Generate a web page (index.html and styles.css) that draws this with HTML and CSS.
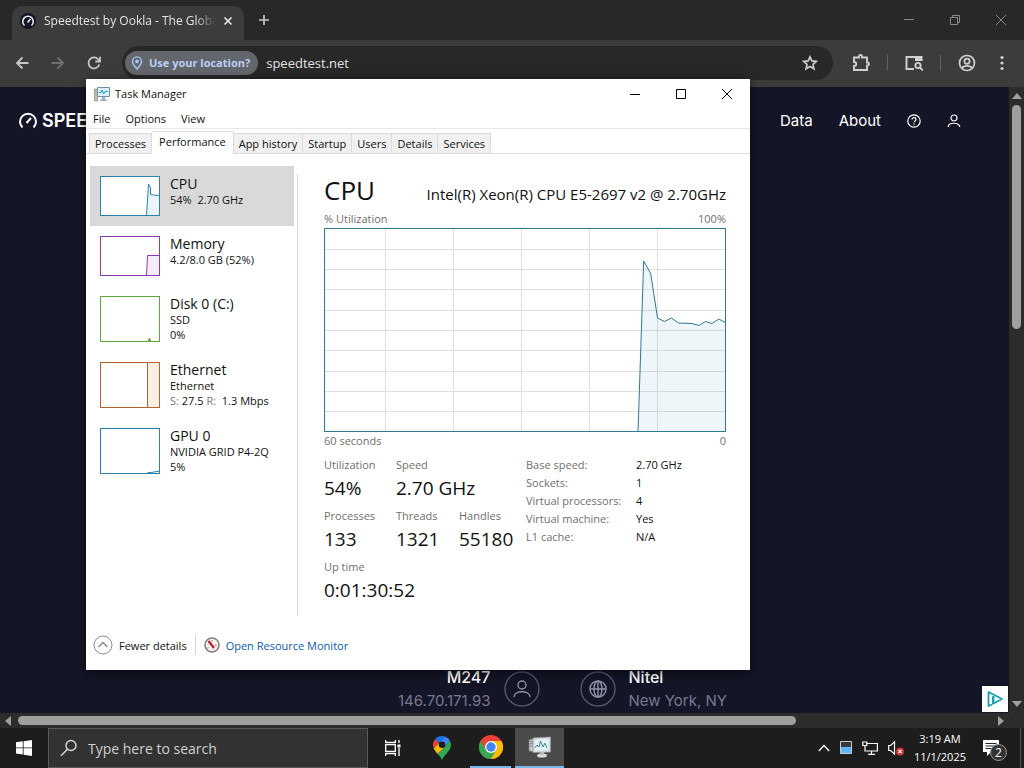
FILE: index.html
```html
<!DOCTYPE html>
<html lang="en">
  <head>
    <meta charset="UTF-8" />
    <meta name="viewport" content="width=device-width, initial-scale=1.0" />
    <title>Desktop</title>
    <link rel="stylesheet" href="styles.css">
  </head>
  <body>
    <!-- browser -->
    <div class="browser">
      <header class="tab-strip">
        <div class="browser-tab">
          <svg class="favicon" viewBox="0 0 16 16" fill="none" stroke="#e8eaed" stroke-width="2">
            <circle cx="8" cy="8" r="8" fill="#141526" stroke="none" />
            <path d="M4.500 12.500A5.300 5.300 0 1 1 11.500 12.500M7.500 9.500L10.500 6" stroke-width="1.600" />
          </svg>
          <span class="tab-title">Speedtest by Ookla - The Global</span>
          <button class="icon-btn tab-close" aria-label="Close tab">
            <svg width="10" height="10" viewBox="0 0 10 10" fill="none" stroke="#e8eaed" stroke-width="1.600"><path d="M1.500 1.500l7 7M8.500 1.500l-7 7" /></svg>
          </button>
        </div>
        <button class="icon-btn new-tab" aria-label="New tab">
          <svg width="12" height="12" viewBox="0 0 12 12" fill="none" stroke="#c8c8c8" stroke-width="1.700"><path d="M6 1v10M1 6h10" /></svg>
        </button>
        <div class="window-buttons browser-buttons">
          <button class="icon-btn" aria-label="Minimize"><svg width="12" height="12" viewBox="0 0 12 12" stroke="#8a8a8a"><path d="M1 5.500h10" /></svg></button>
          <button class="icon-btn" aria-label="Restore"><svg width="12" height="12" viewBox="0 0 12 12" fill="none" stroke="#8a8a8a"><path d="M1.500 3.500h7v7h-7zM3.500 3.500v-2h7v7h-2" /></svg></button>
          <button class="icon-btn" aria-label="Close"><svg width="12" height="12" viewBox="0 0 12 12" stroke="#8a8a8a"><path d="M1 1l10 10M11 1L1 11" /></svg></button>
        </div>
      </header>

      <div class="toolbar">
        <button class="icon-btn" aria-label="Back"><svg width="14" height="14" viewBox="0 0 14 14" fill="none" stroke="#c7c7c7" stroke-width="1.800"><path d="M13.500 7H2M7.500 1.500L2 7l5.500 5.500" /></svg></button>
        <button class="icon-btn" aria-label="Forward"><svg width="14" height="14" viewBox="0 0 14 14" fill="none" stroke="#707070" stroke-width="1.800"><path d="M.5 7H12M6.500 1.500L12 7l-5.500 5.500" /></svg></button>
        <button class="icon-btn" aria-label="Reload"><svg width="14" height="14" viewBox="0 0 14 14" fill="none" stroke="#c7c7c7" stroke-width="1.800"><path d="M12.300 8.500A5.500 5.500 0 1 1 11.500 3.700L13 5.300M13 .8v4.700H8.300" /></svg></button>
        <div class="omnibox">
          <button class="location-chip">
            <svg width="12" height="14" viewBox="0 0 12 14" fill="none" stroke="#a8c7fa" stroke-width="1.400"><path d="M6 13C3 9.600 1.500 7.500 1.500 5.400a4.500 4.500 0 0 1 9 0C10.500 7.500 9 9.600 6 13z" /><circle cx="6" cy="5.300" r="1.200" fill="#a8c7fa" /></svg>
            Use your location?
          </button>
          <input class="url" type="text" value="speedtest.net" aria-label="Address" />
          <button class="icon-btn" aria-label="Bookmark"><svg width="16" height="16" viewBox="0 0 16 16" fill="none" stroke="#d0d0d0" stroke-width="1.600"><path d="M8 1.800l1.900 4.100 4.500.5-3.400 3 1 4.400L8 11.500l-4 2.300 1-4.400-3.400-3 4.500-.5z" /></svg></button>
        </div>
        <div class="extensions">
          <button class="icon-btn" aria-label="Extensions"><svg width="18" height="18" viewBox="0 0 18 18" fill="none" stroke="#d0d0d0" stroke-width="1.900"><path d="M2 3.500h5v-1a1.500 1.500 0 0 1 3 0v1h5v5h.5a1.500 1.500 0 0 1 0 3H15V16H2v-4c3 0 3-4 0-4z" /></svg></button>
          <span class="divider"></span>
          <button class="icon-btn" aria-label="Search tabs"><svg width="18" height="18" viewBox="0 0 18 18" fill="none" stroke="#d0d0d0" stroke-width="1.900"><path d="M9 15H1.500V3H11" /><path d="M10 2h7.500v5H10z" fill="#d0d0d0" stroke="none" /><circle cx="13" cy="11.500" r="2.600" /><path d="M15 13.500l3 3" /></svg></button>
          <span class="divider"></span>
          <button class="icon-btn" aria-label="Profile"><svg width="18" height="18" viewBox="0 0 18 18" fill="none" stroke="#d0d0d0" stroke-width="1.700"><circle cx="9" cy="9" r="7.500" /><circle cx="9" cy="7.300" r="2.600" /><path d="M3.800 14.200c2-3 8.400-3 10.400 0" /></svg></button>
          <button class="icon-btn" aria-label="Menu"><svg width="18" height="18" viewBox="0 0 18 18" fill="#d0d0d0"><circle cx="9" cy="3.500" r="1.600" /><circle cx="9" cy="9" r="1.600" /><circle cx="9" cy="14.500" r="1.600" /></svg></button>
        </div>
      </div>

      <div class="viewport">
        <div class="site">
          <nav class="site-nav">
            <a class="logo" href="#">
              <svg width="20" height="20" viewBox="0 0 20 20" fill="none" stroke="#fff" stroke-width="2"><path d="M4.500 16.500A8 8 0 1 1 15.500 16.500M8.500 12L13 7" /></svg>
              SPEEDTEST
            </a>
            <div class="site-links">
              <a href="#">Data</a>
              <a href="#">About</a>
              <a href="#" aria-label="Help"><svg width="14" height="14" viewBox="0 0 14 14" fill="none" stroke="#fff" stroke-width="1.200"><circle cx="7" cy="7" r="6.200" /><path d="M5 5.500c0-2.500 4-2.500 4 0C9 7 7 7 7 8.500M7 9.500v1.300" /></svg></a>
              <a href="#" aria-label="Account"><svg width="14" height="14" viewBox="0 0 14 14" fill="none" stroke="#fff" stroke-width="1.200"><circle cx="7" cy="4" r="3" /><path d="M1.200 13c0-5 11.600-5 11.600 0" /></svg></a>
            </div>
          </nav>
          <div class="servers">
            <div class="server client">
              <div>
                <div class="server-name">M247</div>
                <div class="server-info">146.70.171.93</div>
              </div>
              <svg width="36" height="36" viewBox="0 0 36 36" fill="none" stroke="#9193a8" stroke-width="1.400"><circle cx="18" cy="18" r="17" stroke="#55576e" /><circle cx="18" cy="14" r="4" /><path d="M10 26c0-7 16-7 16 0" /></svg>
            </div>
            <div class="server">
              <svg width="36" height="36" viewBox="0 0 36 36" fill="none" stroke="#9193a8" stroke-width="1.400"><circle cx="18" cy="18" r="17" stroke="#55576e" /><circle cx="18" cy="18" r="8" /><ellipse cx="18" cy="18" rx="4" ry="8" /><path d="M10 18h16M18 10v16" /></svg>
              <div>
                <div class="server-name">Nitel</div>
                <div class="server-info">New York, NY</div>
              </div>
            </div>
          </div>
          <a class="ad-mark" href="#" aria-label="AdChoices"><svg width="18" height="18" viewBox="0 0 18 18" fill="none" stroke="#1a9fb0" stroke-width="1.800" stroke-linejoin="round"><path d="M6 14.500L2.500 16V2L16 9 7.500 13.500V6" /><path d="M6.500 6.500v8" stroke-width="1.200" /></svg></a>
        </div>
        <div class="scroll-v">
          <svg width="10" height="6" viewBox="0 0 10 6" fill="#a0a0a0"><path d="M5 0l5 6H0z" /></svg>
          <div class="track-v"><div class="thumb-v"></div></div>
          <svg width="10" height="6" viewBox="0 0 10 6" fill="#a0a0a0"><path d="M5 6L0 0h10z" /></svg>
        </div>
      </div>
      <div class="scroll-h">
        <svg width="6" height="10" viewBox="0 0 6 10" fill="#a0a0a0"><path d="M0 5l6-5v10z" /></svg>
        <div class="track-h"><div class="thumb-h"></div></div>
        <svg width="6" height="10" viewBox="0 0 6 10" fill="#a0a0a0"><path d="M6 5L0 0v10z" /></svg>
      </div>
    </div>

    <!-- task manager -->
    <main class="task-manager">
      <header class="title-bar">
        <svg width="16" height="16" viewBox="0 0 16 16"><path d="M.5 3h3v12h-3z" fill="#c9c2b4" stroke="#8c8678" stroke-width=".7" /><path d="M1.500 5h1M1.500 7h1M1.500 9h1" stroke="#7a6" /><path d="M3.500 1.500h12v9h-12z" fill="#d8f0fb" stroke="#6f8fa8" /><path d="M5 6.500h2L8.200 4l1.500 4 1.500-2.500H14" fill="none" stroke="#1a9acb" /><path d="M8 11h3v2.500h2V15H6v-1.500h2z" fill="#9eb0c0" /></svg>
        <h1>Task Manager</h1>
        <div class="window-buttons">
          <button class="icon-btn" aria-label="Minimize"><svg width="12" height="12" viewBox="0 0 12 12" stroke="#000"><path d="M1 6.500h10" /></svg></button>
          <button class="icon-btn" aria-label="Maximize"><svg width="12" height="12" viewBox="0 0 12 12" fill="none" stroke="#000"><path d="M1.500 1.500h9v9h-9z" /></svg></button>
          <button class="icon-btn" aria-label="Close"><svg width="12" height="12" viewBox="0 0 12 12" stroke="#000"><path d="M1 1l10 10M11 1L1 11" /></svg></button>
        </div>
      </header>
      <nav class="menu-bar">
        <button>File</button>
        <button>Options</button>
        <button>View</button>
      </nav>
      <div class="tabs" role="tablist">
        <button role="tab">Processes</button>
        <button role="tab" class="active" aria-selected="true">Performance</button>
        <button role="tab">App history</button>
        <button role="tab">Startup</button>
        <button role="tab">Users</button>
        <button role="tab">Details</button>
        <button role="tab">Services</button>
      </div>

      <div class="content">
        <div class="sidebar">
          <button class="resource cpu selected">
            <svg class="thumb" viewBox="0 0 58 38" preserveAspectRatio="none"><path d="M45.500 39L47.500 7l2 4v6.500l3 .5 6 .5V39" /></svg>
            <span class="resource-text"><b>CPU</b><span>54%&nbsp; 2.70 GHz</span></span>
          </button>
          <button class="resource memory">
            <svg class="thumb" viewBox="0 0 58 38" preserveAspectRatio="none"><path d="M45.500 39l1-20.500H59V39" /></svg>
            <span class="resource-text"><b>Memory</b><span>4.2/8.0 GB (52%)</span></span>
          </button>
          <button class="resource disk">
            <svg class="thumb" viewBox="0 0 58 44" preserveAspectRatio="none"><path d="M47 45l1.500-4 1.500 4" /></svg>
            <span class="resource-text"><b>Disk 0 (C:)</b><span>SSD</span><span>0%</span></span>
          </button>
          <button class="resource ethernet">
            <svg class="thumb" viewBox="0 0 58 44" preserveAspectRatio="none"><path d="M46.500 46V-1H59V46" /></svg>
            <span class="resource-text"><b>Ethernet</b><span>Ethernet</span><span><i>S:</i> 27.5 <i>R:</i>&nbsp; 1.3 Mbps</span></span>
          </button>
          <button class="resource gpu">
            <svg class="thumb" viewBox="0 0 58 44" preserveAspectRatio="none"><path d="M46 44l7-1 6-1v3" /></svg>
            <span class="resource-text"><b>GPU 0</b><span>NVIDIA GRID P4-2Q</span><span>5%</span></span>
          </button>
        </div>

        <section class="details">
          <div class="details-head">
            <h2>CPU</h2>
            <span class="model">Intel(R) Xeon(R) CPU E5-2697 v2 @ 2.70GHz</span>
          </div>
          <div class="axis"><span>% Utilization</span><span>100%</span></div>
          <svg class="chart" viewBox="0 0 400 202" preserveAspectRatio="none">
            <path class="grid" d="M60.500 0v202M128.500 0v202M196.500 0v202M264.500 0v202M332.500 0v202M0 20.500h400M0 40.500h400M0 60.500h400M0 81.500h400M0 101.500h400M0 121.500h400M0 142.500h400M0 162.500h400M0 182.500h400" />
            <path class="usage" d="M313 203L318.700 32 325.700 44.500 332.500 89 339.500 92.500 346.500 89 353.500 94 367 94.500 374 96.500 380.500 92.500 387 94.500 394 90 401 94V203z" />
          </svg>
          <div class="axis"><span>60 seconds</span><span>0</span></div>

          <div class="stats">
            <div class="counters">
              <div class="counter"><span>Utilization</span><strong>54%</strong></div>
              <div class="counter wide"><span>Speed</span><strong>2.70 GHz</strong></div>
              <div class="counter"><span>Processes</span><strong>133</strong></div>
              <div class="counter"><span>Threads</span><strong>1321</strong></div>
              <div class="counter"><span>Handles</span><strong>55180</strong></div>
              <div class="counter wide"><span>Up time</span><strong>0:01:30:52</strong></div>
            </div>
            <dl class="specs">
              <dt>Base speed:</dt><dd>2.70 GHz</dd>
              <dt>Sockets:</dt><dd>1</dd>
              <dt>Virtual processors:</dt><dd>4</dd>
              <dt>Virtual machine:</dt><dd>Yes</dd>
              <dt>L1 cache:</dt><dd>N/A</dd>
            </dl>
          </div>
        </section>
      </div>

      <footer class="status">
        <button class="fewer">
          <svg width="20" height="20" viewBox="0 0 20 20" fill="none" stroke="#8a8a8a"><circle cx="10" cy="10" r="9" /><path d="M5.500 12L10 7.500l4.500 4.500" stroke-width="1.500" /></svg>
          Fewer details
        </button>
        <a href="#">
          <svg width="16" height="16" viewBox="0 0 16 16"><circle cx="8" cy="8" r="7" fill="#f3efee" stroke="#87807d" stroke-width="1.600" /><path d="M4.500 4l5.500 7" stroke="#b3202a" stroke-width="2.200" /><path d="M8 3v1.500M12.500 8H11M4.500 10.500l-1 .5" stroke="#777" /></svg>
          Open Resource Monitor
        </a>
      </footer>
    </main>

    <!-- taskbar -->
    <footer class="taskbar">
      <button class="icon-btn start" aria-label="Start"><svg width="16" height="16" viewBox="0 0 16 16" fill="#fff"><path d="M0 2.200l6.800-.9v6.200H0zM7.600 1.200L16 0v7.500H7.600zM0 8.300h6.800v6.200L0 13.600zM7.600 8.300H16V16l-8.400-1.200z" /></svg></button>
      <label class="search">
        <svg width="18" height="18" viewBox="0 0 18 18" fill="none" stroke="#d8d8d8" stroke-width="1.400"><circle cx="11" cy="6.500" r="5" /><path d="M7.500 10.200L1 16.800" /></svg>
        <input type="text" placeholder="Type here to search" aria-label="Search" />
      </label>
      <div class="apps">
        <button class="icon-btn" aria-label="Task view"><svg width="16" height="16" viewBox="0 0 16 16" fill="none" stroke="#fff" stroke-width="1.300"><path d="M.7 0v2.500h9.600V0M.7 16v-2.500h9.600V16M.7 4.700h9.600v6.600H.7zM14 0v3M14 8v8" /><path d="M12.500 4.500h3v3h-3z" fill="#fff" stroke="none" /></svg></button>
        <button class="icon-btn" aria-label="Maps">
          <svg width="18" height="24" viewBox="0 0 18 24">
            <path d="M9 0a9 9 0 0 0-7 3.300L6 7l6-6.400A9 9 0 0 0 9 0z" fill="#1a73e8" />
            <path d="M2 3.300A9 9 0 0 0 .8 12.500L6 7z" fill="#ea4335" />
            <path d="M12 .6L6 7l6 4 5-6A9 9 0 0 0 12 .6z" fill="#4285f4" />
            <path d="M.8 12.500c.8 1.800 2 3.300 3.700 5.300L12 11 6 7z" fill="#fbbc04" />
            <path d="M17 5l-5 6-7.500 6.800C7 20.500 8 22 9 24c1.500-5 9-9 9-15a9 9 0 0 0-1-4z" fill="#34a853" />
            <circle cx="9" cy="8.800" r="3.300" fill="#1d1d1d" />
          </svg>
        </button>
        <button class="icon-btn running" aria-label="Chrome">
          <svg width="24" height="24" viewBox="0 0 24 24">
            <circle cx="12" cy="12" r="12" fill="#ea4335" />
            <path d="M1.600 6A12 12 0 0 0 12 24l5.200-9L12 12 6.800 15z" fill="#34a853" />
            <path d="M12 24A12 12 0 0 0 22.400 6H12l5.200 9z" fill="#fbbc04" />
            <circle cx="12" cy="12" r="6" fill="#fff" /><circle cx="12" cy="12" r="4.700" fill="#4285f4" />
          </svg>
        </button>
        <button class="icon-btn running current" aria-label="Task Manager">
          <svg width="24" height="22" viewBox="0 0 24 22"><path d="M1 4l7-2v14l-7-1z" fill="#c4c9c6" stroke="#777" stroke-width=".6" /><path d="M2 6l4-1M2 8l4-1M2 10h4" stroke="#657" stroke-width=".7" /><path d="M5 2L22.500 1v15L5 16.500z" fill="#d9e0e2" stroke="#999" stroke-width=".7" /><path d="M7 4l13.500-1v11L7 14.500z" fill="#e6f3f7" /><path d="M7 12l2-3 2 2 1.500-6L15 11l2-4 2 5" fill="none" stroke="#3f8795" /><ellipse cx="14" cy="19.500" rx="5" ry="2" fill="#dedede" /><path d="M12 16h4v3h-4z" fill="#bbb" /></svg>
        </button>
      </div>
      <div class="tray">
        <svg width="12" height="16" viewBox="0 0 12 16" fill="none" stroke="#fff" stroke-width="1.300"><path d="M.8 11L6 5.500l5.200 5.500" /></svg>
        <svg width="12" height="16" viewBox="0 0 12 16"><path d="M.5 1.500h11v12H.5z" fill="#333a40" stroke="#ccc" /><path d="M1 7h10v6H1z" fill="#5db8f5" /></svg>
        <svg width="16" height="16" viewBox="0 0 16 16" fill="none" stroke="#fff" stroke-width="1.200"><path d="M5 3.500h10.400v7.500H3V7M.8 2h4v3.500h-4zM3 5v3M9.500 11v3M6 14.300h7" /></svg>
        <svg width="16" height="16" viewBox="0 0 16 16"><path d="M.7 5.500h2l3.800-3.700v12.400L2.700 10.500h-2z" fill="none" stroke="#fff" stroke-width="1.200" /><circle cx="12" cy="11.500" r="4" fill="#d13438" /><path d="M10.300 9.800l3.400 3.400M13.700 9.800l-3.400 3.400" stroke="#fff" stroke-width="1.100" /></svg>
        <time class="clock">3:19 AM<br />11/1/2025</time>
        <div class="notifications">
          <svg width="18" height="18" viewBox="0 0 18 18"><path d="M1 1h16v12H9l-4 4v-4H1z" fill="#fff" /><path d="M3.500 4.500h11M3.500 7h11M3.500 9.500h7" stroke="#222" /></svg>
          <span class="badge">2</span>
        </div>
        <span class="show-desktop"></span>
      </div>
    </footer>
  </body>
</html>
```
FILE: styles.css
```css
* {
  padding: 0;
  margin: 0;
  box-sizing: border-box;
}
body {
  height: 100vh;
  display: flex;
  flex-direction: column;
  overflow: hidden;
  position: relative;
  background-color: #141526;
  font-family: "Open Sans", "Noto Sans", sans-serif;
  font-size: 11px;
}
button,
input {
  font: inherit;
  color: inherit;
  background: none;
  border: none;
  outline: none;
}
button {
  cursor: pointer;
}
a {
  color: inherit;
  text-decoration: none;
}
svg {
  display: block;
  flex-shrink: 0;
}
.icon-btn {
  display: flex;
  align-items: center;
  justify-content: center;
  flex-shrink: 0;
}
.window-buttons {
  display: flex;
  align-self: stretch;
  margin-left: auto;
}
.window-buttons .icon-btn {
  width: 46px;
}

/* browser */
.browser {
  flex: 1;
  min-height: 0;
  display: flex;
  flex-direction: column;
}
.tab-strip {
  height: 40px;
  display: flex;
  align-items: center;
  padding-left: 12px;
  background-color: #282828;
}
.browser-tab {
  width: 232px;
  height: 34px;
  align-self: flex-end;
  display: flex;
  align-items: center;
  padding: 0 4px 5px 8px;
  border-radius: 10px 10px 0 0;
  background-color: #3c3c3c;
  color: #e3e3e3;
  font-size: 12px;
}
.favicon {
  width: 16px;
  height: 16px;
  margin-right: 8px;
}
.tab-title {
  flex: 1;
  overflow: hidden;
  white-space: nowrap;
  mask-image: linear-gradient(to right, #000 88%, transparent);
}
.tab-close {
  width: 24px;
  height: 24px;
}
.new-tab {
  width: 28px;
  height: 28px;
  margin-left: 6px;
}
.toolbar {
  height: 47px;
  display: flex;
  align-items: center;
  padding: 0 4px 2px;
  background-color: #3c3c3c;
}
.toolbar > .icon-btn {
  width: 36px;
  height: 34px;
}
.omnibox {
  flex: 1;
  height: 34px;
  display: flex;
  align-items: center;
  gap: 8px;
  margin-left: 10px;
  padding: 0 15px 0 3px;
  border-radius: 17px;
  background-color: #282828;
}
.location-chip {
  height: 24px;
  display: flex;
  align-items: center;
  gap: 6px;
  padding: 0 8px 0 6px;
  border-radius: 12px;
  background-color: #63666b;
  color: #b9d0f7;
  font-weight: 700;
  white-space: nowrap;
}
.url {
  flex: 1;
  min-width: 0;
  color: #e3e3e3;
  font-size: 13px;
}
.extensions {
  display: flex;
  align-items: center;
  gap: 17px;
  padding: 0 9px 0 19px;
}
.divider {
  width: 1px;
  height: 16px;
  background-color: #606060;
}
.viewport {
  flex: 1;
  min-height: 0;
  display: flex;
}
.site {
  flex: 1;
  position: relative;
  display: flex;
  flex-direction: column;
  justify-content: space-between;
  background-color: #141526;
  color: #fff;
  font-family: Inter, "Liberation Sans", sans-serif;
  font-size: 15px;
}
.site-nav {
  display: flex;
  align-items: center;
  justify-content: space-between;
  padding: 23px 48px 0 18px;
}
.logo {
  display: flex;
  align-items: center;
  gap: 4px;
  font-size: 18px;
  font-weight: 600;
}
.site-links {
  display: flex;
  align-items: center;
  gap: 26px;
}
.servers {
  display: flex;
  justify-content: center;
  gap: 40px;
  padding-left: 110px;
}
.server {
  flex: 1;
  display: flex;
  align-items: center;
  gap: 13px;
}
.server.client {
  justify-content: flex-end;
  text-align: right;
}
.server-name {
  font-size: 16px;
  font-weight: 500;
  line-height: 24px;
}
.server-info {
  color: #777991;
  line-height: 24px;
}
.ad-mark {
  position: absolute;
  right: 1px;
  bottom: 1px;
  padding: 4px;
  background-color: #fff;
}
.scroll-v {
  width: 15px;
  display: flex;
  flex-direction: column;
  align-items: center;
  gap: 6px;
  padding: 6px 0;
  background-color: #2c2c2c;
}
.track-v {
  flex: 1;
  width: 9px;
}
.thumb-v {
  height: 38%;
  border-radius: 5px;
  background-color: #9f9f9f;
}
.scroll-h {
  height: 15px;
  display: flex;
  align-items: center;
  gap: 7px;
  padding: 0 20px 0 5px;
  background-color: #2c2c2c;
}
.track-h {
  flex: 1;
}
.thumb-h {
  width: 80%;
  height: 9px;
  border-radius: 5px;
  background-color: #9f9f9f;
}

/* task manager */
.task-manager {
  position: absolute;
  top: 79px;
  right: 274px;
  bottom: 98px;
  left: 86px;
  display: flex;
  flex-direction: column;
  background-color: #fff;
  color: #111;
  box-shadow: 0 2px 10px rgba(0, 0, 0, 0.6);
}
.title-bar {
  height: 29px;
  display: flex;
  align-items: center;
  gap: 5px;
  padding-left: 8px;
}
.title-bar h1 {
  font-size: 11px;
  font-weight: 400;
}
.menu-bar {
  height: 21px;
  display: flex;
  gap: 15px;
  padding: 0 7px;
  border-bottom: 1px solid #e8e8e8;
}
.tabs {
  height: 25px;
  display: flex;
  align-items: flex-end;
  padding: 0 3px;
  border-bottom: 1px solid #dcdcdc;
}
.tabs button {
  height: 20px;
  padding: 0 5px;
  border: 1px solid #dcdcdc;
  border-bottom: none;
  border-left-width: 0;
  background-color: #f0f0f0;
}
.tabs button:first-child {
  border-left-width: 1px;
}
.tabs .active {
  height: 23px;
  margin-bottom: -1px;
  padding: 0 7px 3px;
  background-color: #fff;
}
.content {
  flex: 1;
  min-height: 0;
  display: flex;
  padding: 12px 24px 4px 4px;
}
.sidebar {
  width: 204px;
  display: flex;
  flex-direction: column;
}
.resource {
  display: flex;
  gap: 10px;
  padding: 10px;
  text-align: left;
  white-space: nowrap;
}
.resource.selected {
  background-color: #d9d9d9;
}
.thumb {
  width: 60px;
  height: auto;
  min-height: 40px;
  border: 1px solid;
  background-color: #fff;
  overflow: hidden;
}
.thumb path {
  stroke: currentColor;
}
.cpu .thumb,
.gpu .thumb {
  color: #2a83ad;
  fill: #eaf5fb;
}
.memory .thumb {
  color: #8a3aae;
  fill: #f5ecf9;
}
.disk .thumb {
  color: #5fa83c;
  fill: #5fa83c;
}
.ethernet .thumb {
  color: #b3642b;
  fill: #fbefe4;
}
.resource-text {
  display: flex;
  flex-direction: column;
  line-height: 15px;
}
.resource-text b {
  font-size: 14px;
  font-weight: 400;
  line-height: 16px;
}
.resource-text i {
  color: #777;
  font-style: normal;
}
.details {
  flex: 1;
  display: flex;
  flex-direction: column;
  margin: 8px 0 0 3px;
  padding-left: 26px;
  border-left: 1px solid #d5d5d5;
}
.details-head {
  height: 36px;
  display: flex;
  align-items: baseline;
  justify-content: space-between;
  white-space: nowrap;
}
.details-head h2 {
  font-size: 26px;
  font-weight: 400;
  line-height: 32px;
}
.model {
  font-size: 15px;
}
.axis {
  display: flex;
  justify-content: space-between;
  line-height: 18px;
  color: #707070;
}
.chart {
  flex: 1;
  width: 100%;
  min-height: 0;
  border: 1px solid #2f7896;
}
.grid {
  fill: none;
  stroke: #e0e0e2;
}
.usage {
  fill: rgba(17, 125, 187, 0.07);
  stroke: #2f7896;
}
.stats {
  display: flex;
  padding: 6px 0 12px;
}
.counters {
  width: 202px;
  display: grid;
  grid-template-columns: 72px 63px auto;
  row-gap: 5px;
}
.counter {
  display: flex;
  flex-direction: column;
  white-space: nowrap;
}
.counter span {
  color: #707070;
  line-height: 18px;
}
.counter strong {
  font-size: 19px;
  font-weight: 400;
  line-height: 28px;
}
.counter.wide {
  grid-column: span 2;
}
.specs {
  display: grid;
  grid-template-columns: 110px auto;
  align-content: start;
  line-height: 18px;
  white-space: nowrap;
}
.specs dt {
  color: #707070;
}
.status {
  height: 50px;
  display: flex;
  align-items: center;
  padding: 0 7px;
}
.fewer,
.status a {
  display: flex;
  align-items: center;
  gap: 6px;
}
.fewer {
  padding-right: 8px;
  border-right: 1px solid #d5d5d5;
}
.status a {
  padding-left: 8px;
  color: #0b5cad;
}

/* taskbar */
.taskbar {
  height: 40px;
  display: flex;
  background-color: #1d1d1d;
  color: #fff;
}
.start {
  width: 48px;
}
.search {
  width: 320px;
  display: flex;
  align-items: center;
  gap: 10px;
  padding: 0 11px;
  border: 1px solid #585858;
  background-color: #323232;
}
.search input {
  flex: 1;
  min-width: 0;
  font-size: 14px;
}
.search input::placeholder {
  color: #d0d0d0;
}
.apps {
  display: flex;
}
.apps .icon-btn {
  width: 49px;
}
.apps .running {
  width: 41px;
  margin: 0 4px;
  border-bottom: 2px solid #76b9ed;
}
.apps .current {
  width: 49px;
  margin: 0;
  background-color: #4b4b4b;
}
.tray {
  display: flex;
  align-items: center;
  gap: 10px;
  margin-left: auto;
  padding-right: 3px;
}
.clock {
  line-height: 18px;
  text-align: center;
}
.notifications {
  position: relative;
  margin: 0 10px 0 6px;
}
.badge {
  position: absolute;
  top: 5px;
  left: 8px;
  width: 17px;
  height: 17px;
  border: 1px solid #999;
  border-radius: 50%;
  background-color: #333;
  font-size: 12px;
  line-height: 15px;
  text-align: center;
}
.show-desktop {
  width: 1px;
  height: 40px;
  background-color: #555;
}
```
